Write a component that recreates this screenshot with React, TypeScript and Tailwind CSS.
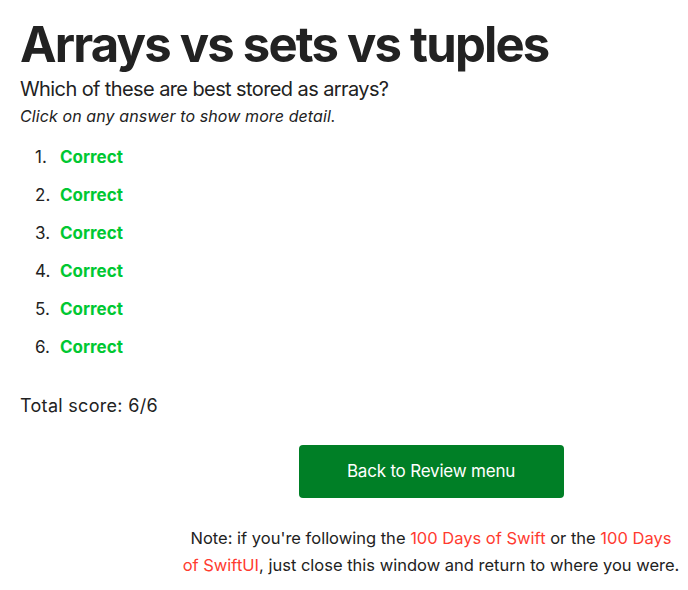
import React from 'react'

const App: React.FC = () => {
  const answers = [1, 2, 3, 4, 5, 6]
  return (
    <div className="min-h-[590px] bg-white px-5 pt-[14px] text-[#222] font-['Inter',sans-serif]">
      <h1 className="text-[49px] font-bold leading-[62px] tracking-[-1.8px]">Arrays vs sets vs tuples</h1>
      <p className="text-[20px] leading-[26px] tracking-[-0.6px]">Which of these are best stored as arrays?</p>
      <p className="text-[16px] italic leading-[28px] tracking-[0.1px]">Click on any answer to show more detail.</p>

      {/* Results */}
      <ol className="mt-[16px] ml-[15px] space-y-[16px]">
        {answers.map((n) => (
          <li key={n} className="flex text-[17px] leading-[22px]">
            <span className="w-[25px]">{n}.</span>
            <span className="font-bold text-[#00c832]">Correct</span>
          </li>
        ))}
      </ol>

      <p className="mt-[36px] text-[18px] leading-[24px] tracking-[0.3px]">Total score: 6/6</p>

      <div className="ml-[161px] w-[500px] flex flex-col items-center">
        <button className="mt-[27px] h-[53px] w-[265px] rounded-[4px] bg-[#007f26] text-[17px] text-white tracking-[-0.2px]">
          Back to Review menu
        </button>

        <p className="mt-[27px] text-center text-[16.5px] leading-[27px]">
          Note: if you're following the <span className="text-[#ff3b30]">100 Days of Swift</span> or the{' '}
          <span className="text-[#ff3b30]">100 Days of SwiftUI</span>, just close this window and return to where you were.
        </p>
      </div>
    </div>
  )
}

export default App
